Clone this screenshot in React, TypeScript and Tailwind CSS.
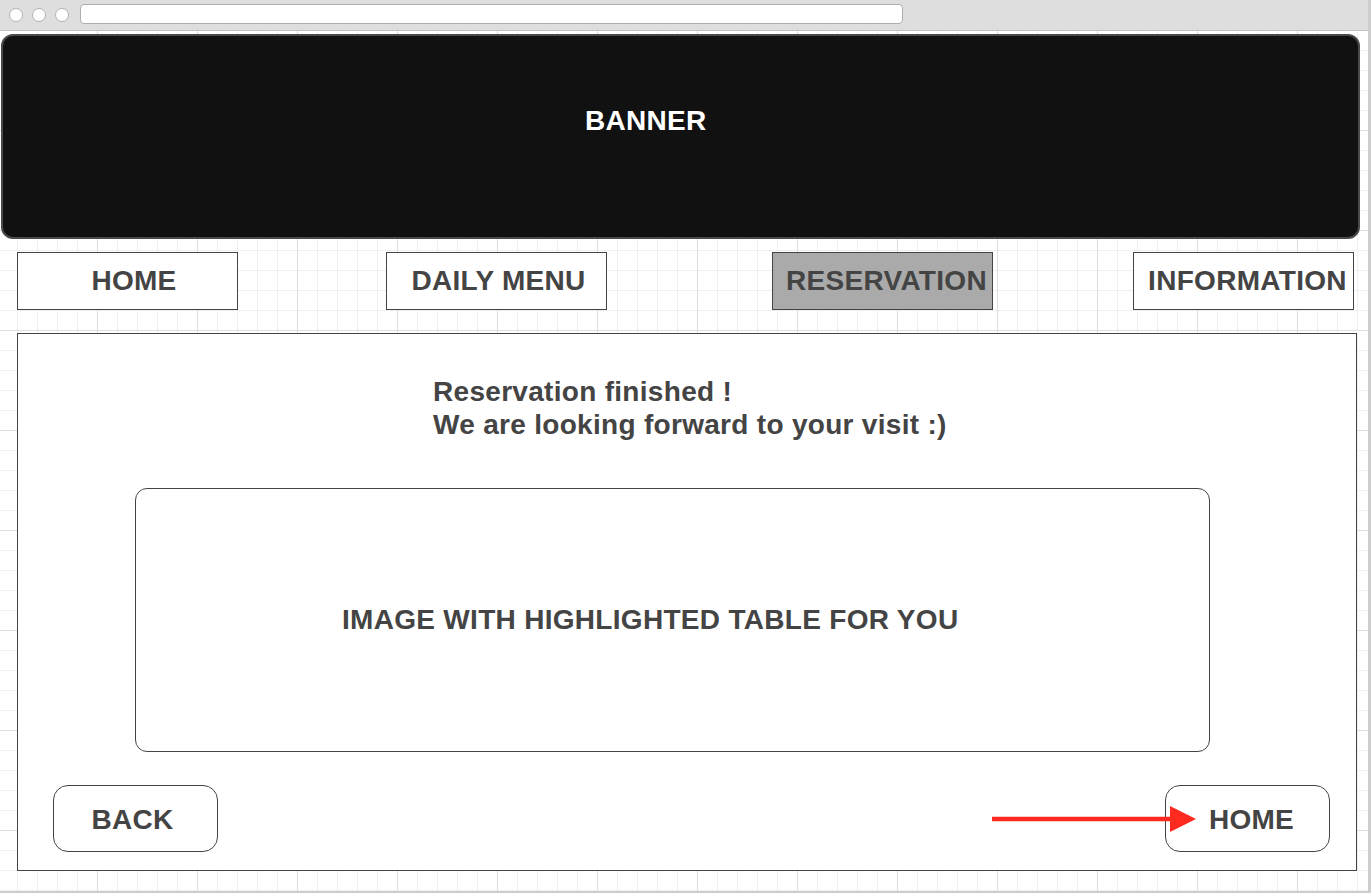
const navItems = [
  { label: 'HOME', gap: 'ml-0', pad: 'pl-[13px]', active: false },
  { label: 'DAILY MENU', gap: 'ml-[148px]', pad: 'pl-[4px]', active: false },
  { label: 'RESERVATION', gap: 'ml-[165px]', pad: 'pl-[8px]', active: true },
  { label: 'INFORMATION', gap: 'ml-[140px]', pad: 'pl-[8px]', active: false },
]

export default function App() {
  return (
    <div className="w-[1371px] h-[893px] overflow-hidden bg-white border-r-[3px] border-b-[2px] border-[#cdcdcd] font-['Liberation_Sans',Arial,sans-serif] tracking-[0.3px] bg-[linear-gradient(to_right,#dedede_1px,transparent_1px),linear-gradient(to_bottom,#dedede_1px,transparent_1px),linear-gradient(to_right,#efefef_1px,transparent_1px),linear-gradient(to_bottom,#efefef_1px,transparent_1px)] bg-[length:100px_100px,100px_100px,20px_20px,20px_20px] bg-[position:97px_0,0_30px,17px_0,0_10px]">
      {/* Browser chrome */}
      <div className="h-[31px] bg-[#dedede] border-b border-[#c2c2c2] flex items-center pl-[9px]">
        <div className="flex gap-[9px]">
          <span className="w-[14px] h-[14px] rounded-full bg-white border border-[#b3b3b3]" />
          <span className="w-[14px] h-[14px] rounded-full bg-white border border-[#b3b3b3]" />
          <span className="w-[14px] h-[14px] rounded-full bg-white border border-[#b3b3b3]" />
        </div>
        <div className="ml-[11px] w-[823px] h-[20px] -mt-[2px] bg-white rounded-[4px] border border-[#adadad]" />
      </div>

      {/* Banner */}
      <div className="ml-[1px] mt-[3px] w-[1359px] h-[205px] bg-[#111111] border-2 border-[#4a4a4a] rounded-[12px] pl-[582px] pt-[69px]">
        <span className="text-white text-[28px] leading-[32px] font-bold">BANNER</span>
      </div>

      {/* Navigation */}
      <nav className="flex pl-[17px] mt-[13px]">
        {navItems.map((item) => (
          <div
            key={item.label}
            className={`${item.gap} ${item.pad} w-[221px] h-[58px] border border-[#444444] flex items-center justify-center text-[28px] font-bold text-[#444444] ${item.active ? 'bg-[#aaaaaa]' : 'bg-white'}`}
          >
            <span className="whitespace-nowrap">{item.label}</span>
          </div>
        ))}
      </nav>

      {/* Content */}
      <main className="ml-[17px] mt-[23px] w-[1340px] h-[538px] bg-white border border-[#444444] flex flex-col">
        <div className="pl-[415px] pt-[41px] text-[28px] leading-[33px] font-bold text-[#444444]">
          <p>Reservation finished !</p>
          <p>We are looking forward to your visit :)</p>
        </div>

        <div className="ml-[117px] mt-[47px] w-[1075px] h-[264px] rounded-[12px] border border-[#444444] flex items-center pl-[206px] text-[28px] font-bold text-[#444444]">
          IMAGE WITH HIGHLIGHTED TABLE FOR YOU
        </div>

        <div className="relative mt-[33px] flex justify-between pl-[35px] pr-[26px]">
          <button className="w-[165px] h-[67px] rounded-[15px] border border-[#444444] bg-white text-[28px] font-bold text-[#444444] pr-[6px] pt-[3px]">
            BACK
          </button>
          <button className="w-[165px] h-[67px] rounded-[15px] border border-[#444444] bg-white text-[28px] font-bold text-[#444444] pl-[8px] pt-[3px]">
            HOME
          </button>
          {/* red arrow pointing at HOME */}
          <svg className="absolute left-[974px] top-[20px]" width="206" height="28" viewBox="0 0 206 28">
            <line x1="0" y1="14" x2="182" y2="14" stroke="#ff2a1f" strokeWidth="4.5" />
            <polygon points="178,1 204,14 178,27" fill="#ff2a1f" />
          </svg>
        </div>
      </main>
    </div>
  )
}
